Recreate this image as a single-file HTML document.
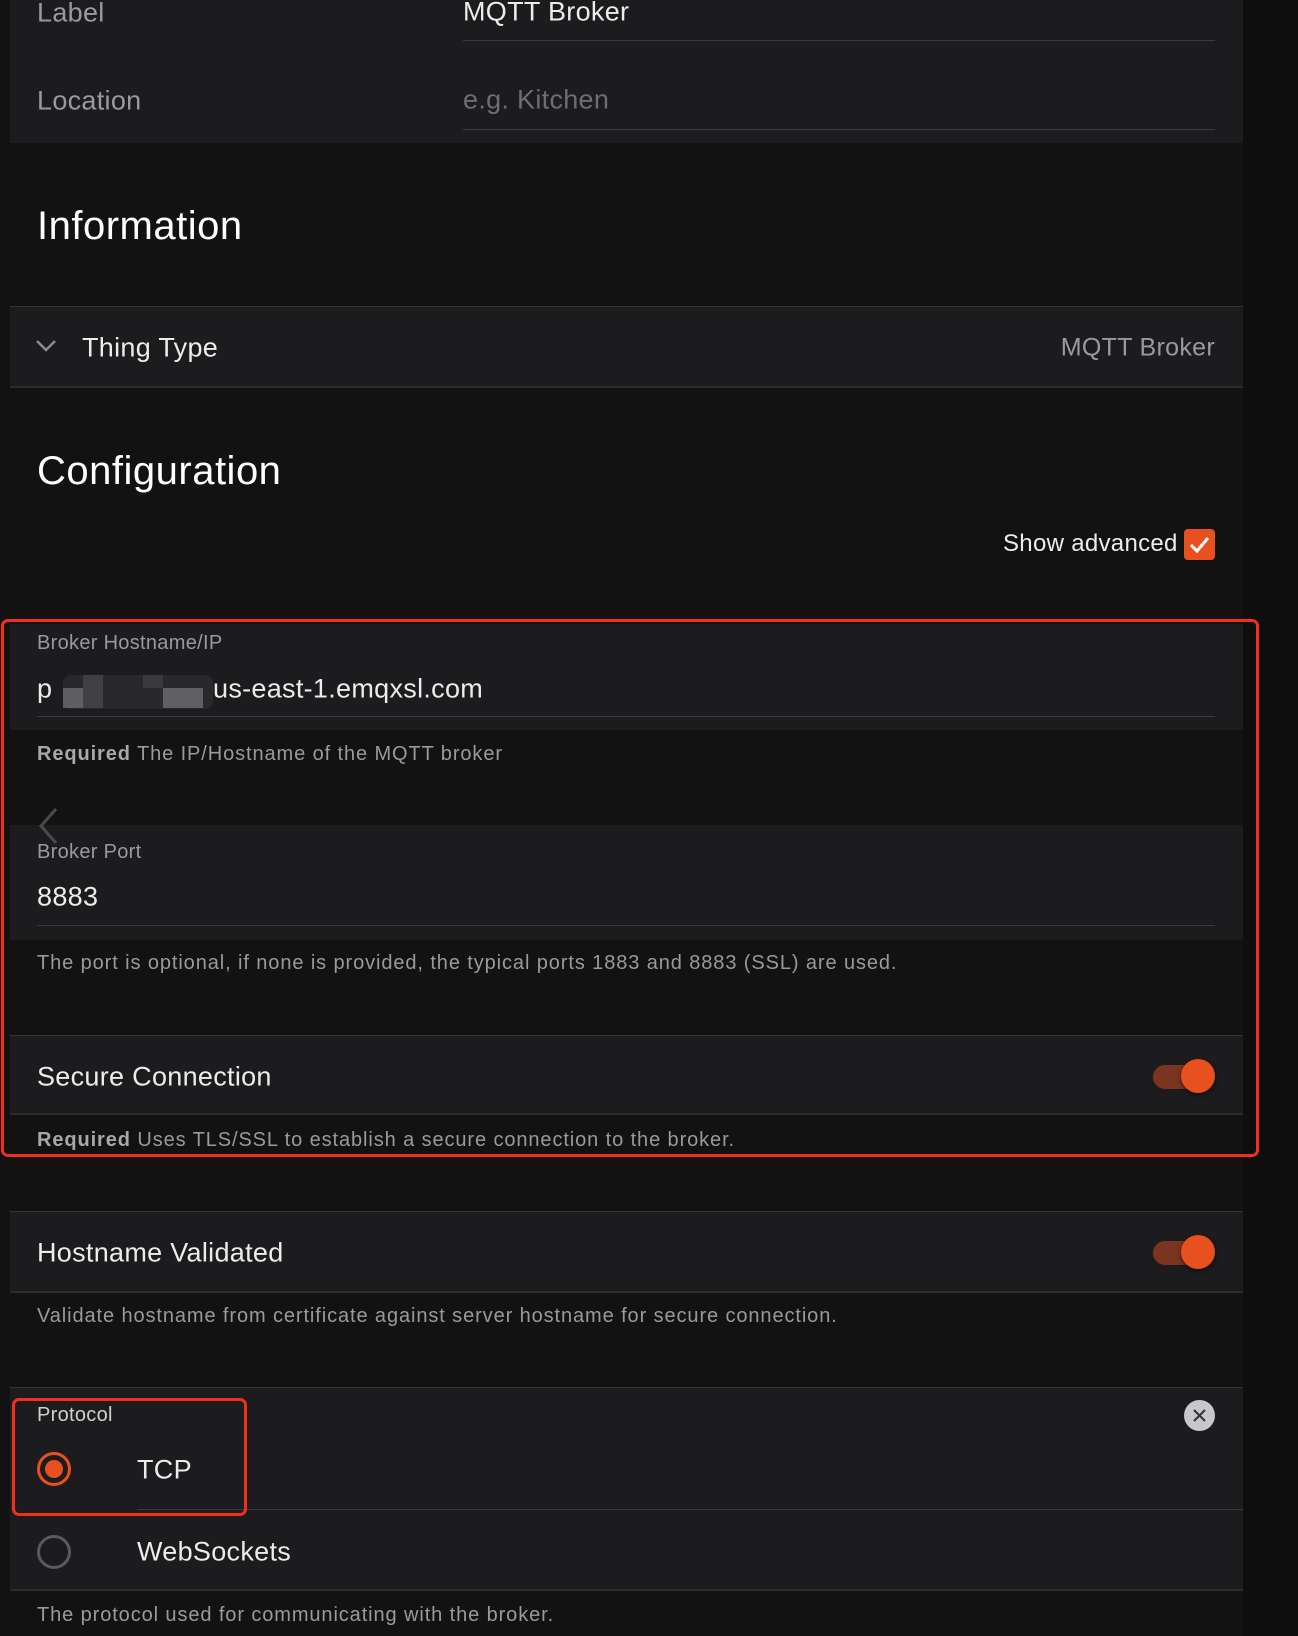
<!DOCTYPE html>
<html><head><meta charset="utf-8"><style>
*{box-sizing:border-box;margin:0;padding:0}
body{width:1298px;height:1636px;background:#121212;font-family:"Liberation Sans",sans-serif;color:#e8e8e8;position:relative;overflow:hidden}
.abs{position:absolute}
.card{position:absolute;left:10px;width:1233px;background:#1c1c1e}
.line{position:absolute;height:1px;background:#3a3a3c}
.t{position:absolute;white-space:nowrap;line-height:1;transform:translateY(-50%)}
.lbl{font-size:20px;color:#9a9a9e;letter-spacing:0.3px}
.val{font-size:27px;color:#ececec;letter-spacing:0.3px}
.help{font-size:20px;color:#9a9a9e;letter-spacing:0.9px}
.help b{color:#a8a8ac}
.h{font-size:40px;color:#fff;font-weight:500;letter-spacing:0.5px}
.toggle{position:absolute;width:64px;height:36px}
.toggle .tr{position:absolute;left:0;top:6px;width:50px;height:24px;border-radius:12px;background:#7a3420}
.toggle .kn{position:absolute;left:28px;top:0;width:34px;height:34px;border-radius:50%;background:#e8501f;box-shadow:0 2px 4px rgba(0,0,0,.5)}
</style></head><body>
<div class="abs" style="left:1243px;top:0;width:55px;height:1636px;background:#0e0e0e"></div>

<div class="card" style="top:0;height:143px"></div>
<div class="t val" style="left:37px;top:13px;color:#9a9a9e;font-size:27px">Label</div>
<div class="t val" style="left:463px;top:12px">MQTT Broker</div>
<div class="line" style="left:463px;width:752px;top:40px"></div>
<div class="t val" style="left:37px;top:101px;color:#9a9a9e">Location</div>
<div class="t val" style="left:463px;top:100px;color:#6e6e72">e.g. Kitchen</div>
<div class="line" style="left:463px;width:752px;top:129px"></div>

<div class="t h" style="left:37px;top:226px">Information</div>

<div class="card" style="top:306px;height:82px;border-top:1px solid #333;border-bottom:2px solid #2c2c2e"></div>
<svg class="abs" style="left:35px;top:339px" width="22" height="14" viewBox="0 0 22 14"><path d="M2 2 L11 11 L20 2" fill="none" stroke="#8a8a8e" stroke-width="2.5"/></svg>
<div class="t val" style="left:82px;top:348px">Thing Type</div>
<div class="t val" style="right:83px;top:348px;color:#9a9a9e;font-size:25px">MQTT Broker</div>

<div class="t h" style="left:37px;top:471px">Configuration</div>
<div class="t val" style="left:1003px;top:544px;font-size:24px">Show advanced</div>
<div class="abs" style="left:1184px;top:529px;width:31px;height:31px;border-radius:4px;background:#e8501f"></div>
<svg class="abs" style="left:1184px;top:529px" width="31" height="31" viewBox="0 0 31 31"><path d="M7 16 L13 22 L24 9" fill="none" stroke="#fff" stroke-width="3"/></svg>

<div class="card" style="top:624px;height:106px"></div>
<div class="t lbl" style="left:37px;top:643px">Broker Hostname/IP</div>
<div class="t val" style="left:37px;top:689px">p</div>
<div class="abs" style="left:63px;top:675px;width:150px;height:34px;border-radius:8px;background:#29292b"></div>
<div class="abs" style="left:63px;top:688px;width:20px;height:20px;background:#5e5e60"></div>
<div class="abs" style="left:83px;top:675px;width:20px;height:33px;background:#404042"></div>
<div class="abs" style="left:143px;top:675px;width:20px;height:13px;background:#3a3a3c"></div>
<div class="abs" style="left:163px;top:688px;width:40px;height:20px;background:#606062"></div>
<div class="t val" style="left:213px;top:689px">us-east-1.emqxsl.com</div>
<div class="line" style="left:37px;width:1178px;top:716px"></div>
<div class="t help" style="left:37px;top:754px"><b>Required</b> The IP/Hostname of the MQTT broker</div>

<div class="card" style="top:825px;height:115px"></div>
<svg class="abs" style="left:36px;top:806px" width="24" height="40" viewBox="0 0 24 40"><path d="M20 3 L5 20 L20 37" fill="none" stroke="#4a4a4c" stroke-width="3"/></svg>
<div class="t lbl" style="left:37px;top:852px">Broker Port</div>
<div class="t val" style="left:37px;top:897px">8883</div>
<div class="line" style="left:37px;width:1178px;top:925px"></div>
<div class="t help" style="left:37px;top:963px">The port is optional, if none is provided, the typical ports 1883 and 8883 (SSL) are used.</div>

<div class="card" style="top:1035px;height:80px;border-top:1px solid #333;border-bottom:2px solid #2c2c2e"></div>
<div class="t val" style="left:37px;top:1077px">Secure Connection</div>
<div class="toggle" style="left:1153px;top:1059px"><div class="tr"></div><div class="kn"></div></div>
<div class="t help" style="left:37px;top:1140px"><b>Required</b> Uses TLS/SSL to establish a secure connection to the broker.</div>

<div class="abs" style="left:1px;top:619px;width:1258px;height:538px;border:3px solid #f0301c;border-radius:7px"></div>

<div class="card" style="top:1211px;height:82px;border-top:1px solid #333;border-bottom:2px solid #2c2c2e"></div>
<div class="t val" style="left:37px;top:1253px">Hostname Validated</div>
<div class="toggle" style="left:1153px;top:1235px"><div class="tr"></div><div class="kn"></div></div>
<div class="t help" style="left:37px;top:1316px">Validate hostname from certificate against server hostname for secure connection.</div>

<div class="card" style="top:1387px;height:204px;border-top:1px solid #333;border-bottom:2px solid #2c2c2e"></div>
<div class="t lbl" style="left:37px;top:1415px;color:#d0d0d0">Protocol</div>
<div class="abs" style="left:1184px;top:1400px;width:31px;height:31px;border-radius:50%;background:#c8c8cc"></div>
<svg class="abs" style="left:1184px;top:1400px" width="31" height="31" viewBox="0 0 31 31"><path d="M10 10 L21 21 M21 10 L10 21" stroke="#333" stroke-width="2"/></svg>
<div class="abs" style="left:37px;top:1452px;width:34px;height:34px;border-radius:50%;border:3px solid #e8501f"></div>
<div class="abs" style="left:45px;top:1460px;width:18px;height:18px;border-radius:50%;background:#e8501f"></div>
<div class="t val" style="left:137px;top:1470px">TCP</div>
<div class="line" style="left:137px;width:1106px;top:1509px"></div>
<div class="abs" style="left:37px;top:1535px;width:34px;height:34px;border-radius:50%;border:3px solid #5a5a5c"></div>
<div class="t val" style="left:137px;top:1552px">WebSockets</div>
<div class="abs" style="left:12px;top:1398px;width:235px;height:118px;border:3px solid #f0301c;border-radius:7px"></div>
<div class="t help" style="left:37px;top:1615px">The protocol used for communicating with the broker.</div>
</body></html>
